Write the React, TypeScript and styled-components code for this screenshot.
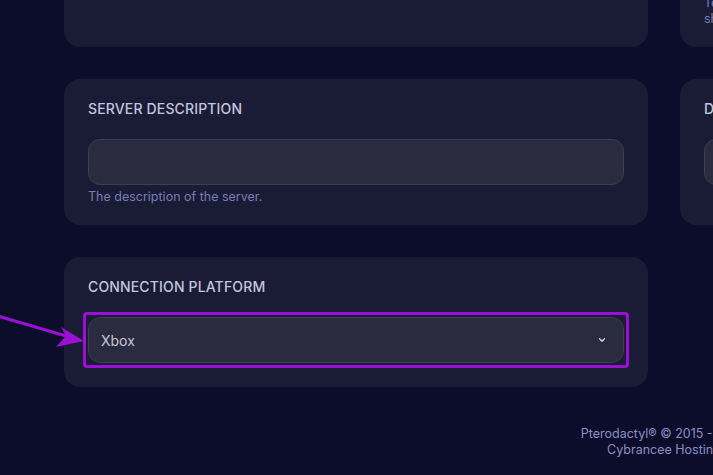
import styled, {createGlobalStyle} from 'styled-components';

const GlobalStyle = createGlobalStyle`
  html, body {
    margin: 0;
    padding: 0;
    overflow: hidden;
    background: #0c0d2a;
    font-family: Inter, "Noto Sans", sans-serif;
  }
`;

const Page = styled.div`
  position: relative;
  margin-top: -115px;
  padding-left: 64px;
  width: 1200px;
`;

const Grid = styled.div`
  display: grid;
  grid-template-columns: 584px 584px;
  gap: 32px;
`;

const Card = styled.div`
  background: #1a1b35;
  border-radius: 16px;
  padding: 20px 24px 20px;
  display: flex;
  flex-direction: column;
`;

const Label = styled.div`
  font-size: 14px;
  line-height: 20px;
  font-weight: 500;
  letter-spacing: 0.15px;
  text-transform: uppercase;
  color: #c3c6df;
  margin-bottom: 20px;
`;

const Input = styled.input`
  box-sizing: border-box;
  height: 46px;
  width: 100%;
  background: #2a2b3f;
  border: 1px solid #3c3d56;
  border-radius: 12px;
  outline: none;
  font: inherit;
`;

const Help = styled.div`
  margin-top: 4px;
  font-size: 12.5px;
  line-height: 16px;
  color: #767db8;
`;

const Highlight = styled.div`
  margin: -5px;
  padding: 2px;
  border: 3px solid #9a10d4;
  border-radius: 4px;
`;

const Select = styled.div`
  box-sizing: border-box;
  height: 46px;
  display: flex;
  align-items: center;
  justify-content: space-between;
  padding: 0 16px 0 12px;
  background: #2a2b3f;
  border: 1px solid #3c3d56;
  border-radius: 12px;
  font-size: 14px;
  color: #c4c6d6;
`;

const PlatformCard = styled(Card)`
  padding-bottom: 24px;
`;

const Footer = styled.footer`
  width: 1200px;
  margin-top: 39px;
  text-align: center;
  font-size: 12.5px;
  line-height: 16px;
  color: #8a90c4;
`;

const Arrow = styled.svg`
  position: absolute;
  left: 0;
  top: 115px;
  pointer-events: none;
`;

const Chevron = () => (
  <svg width="10" height="10" viewBox="0 0 24 24" fill="none" stroke="#d6d9ea" strokeWidth="3" strokeLinecap="round" strokeLinejoin="round">
    <path d="M6 9l6 6 6-6" />
  </svg>
);

export default function App() {
  return (
    <>
      <GlobalStyle />
      <Page>
        <Grid>
          <Card>
            <Label>Server Name</Label>
            <Input />
          </Card>
          <Card>
            <Label>Server Icon</Label>
            <Input />
            <Help>
              Text shown in the server list when players browse
              <br />
              shared servers on the network.
            </Help>
          </Card>
          <Card>
            <Label>Server Description</Label>
            <Input />
            <Help>The description of the server.</Help>
          </Card>
          <Card>
            <Label>Default Map</Label>
            <Input />
          </Card>
          <PlatformCard>
            <Label>Connection Platform</Label>
            <Highlight>
              <Select>
                <span>Xbox</span>
                <Chevron />
              </Select>
            </Highlight>
          </PlatformCard>
        </Grid>
        <Footer>
          Pterodactyl® © 2015 - 2024
          <br />
          Cybrancee Hosting
        </Footer>
        <Arrow width="100" height="400" viewBox="0 0 100 400">
          <line x1="-2" y1="316" x2="66" y2="336" stroke="#9a10d4" strokeWidth="3" />
          <polygon points="84,341 61,327 66,336 56,347" fill="#9a10d4" />
        </Arrow>
      </Page>
    </>
  );
}
